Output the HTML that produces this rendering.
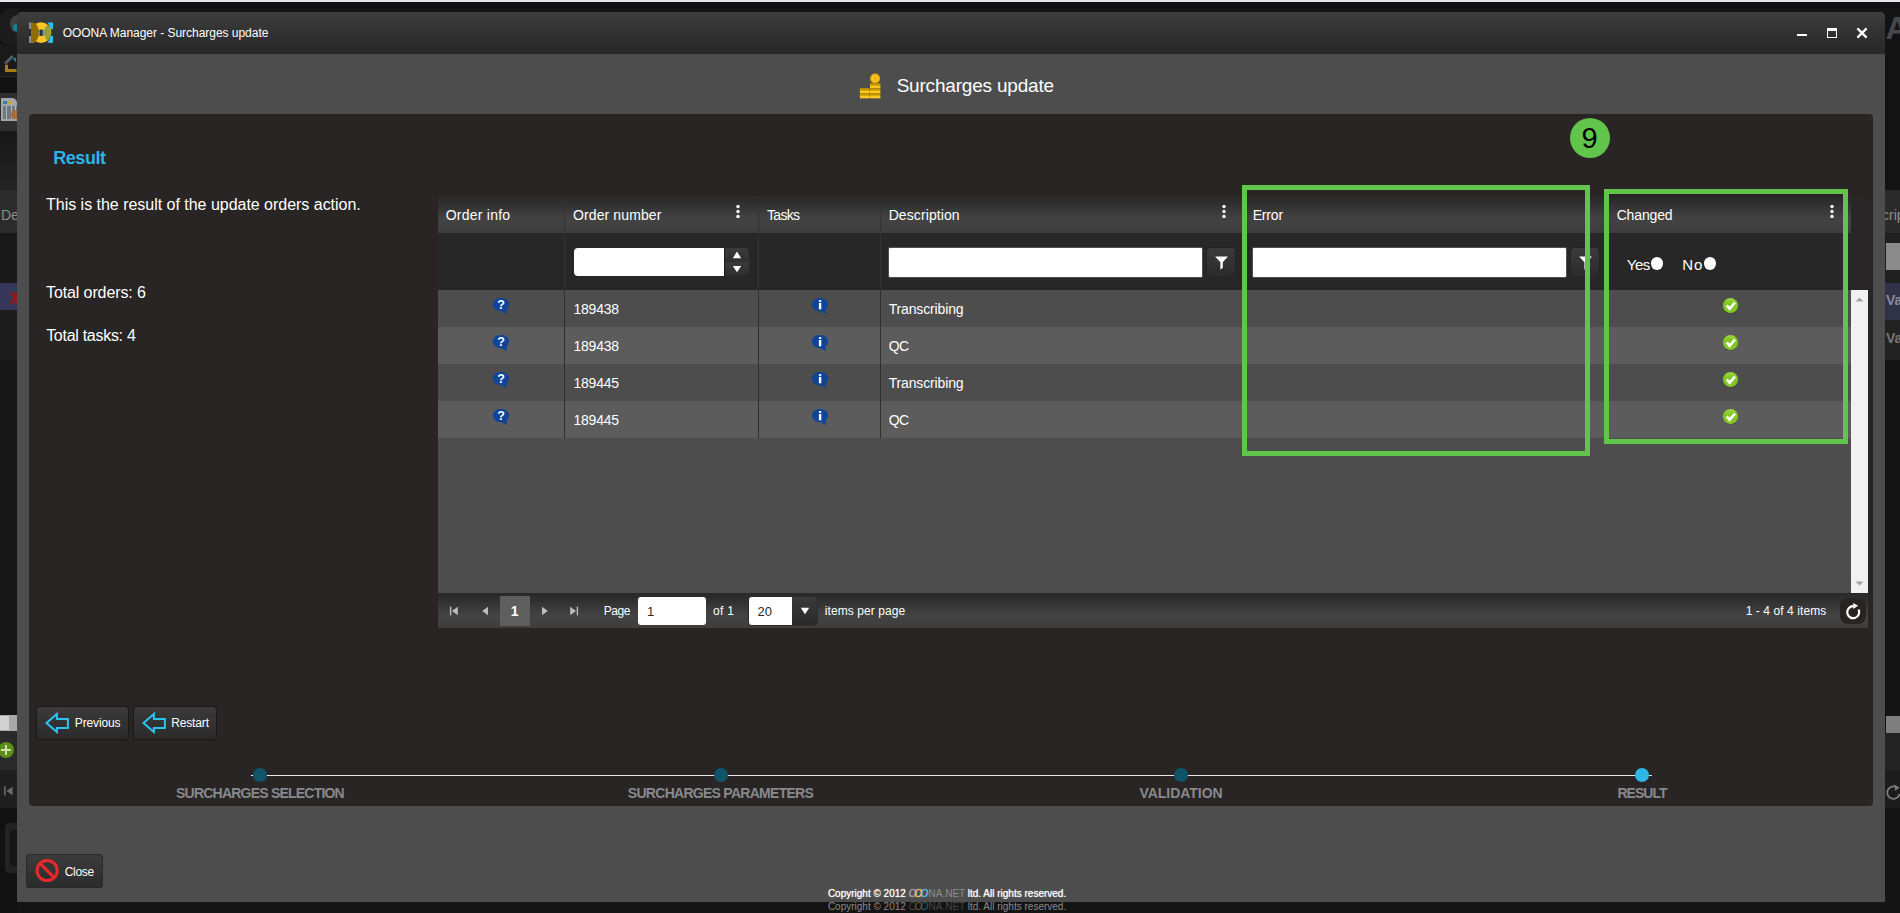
<!DOCTYPE html>
<html lang="en"><head><meta charset="utf-8"><title>OOONA Manager - Surcharges update</title>
<style>
html,body{margin:0;padding:0}
body{width:1900px;height:913px;overflow:hidden;position:relative;background:#161616;font-family:"Liberation Sans",sans-serif}
body>div,body>svg{position:absolute;display:block}
.t{white-space:pre}
</style></head><body>
<div style="left:0px;top:0px;width:1900px;height:2px;background:#e4e4ea"></div>
<div style="left:0px;top:2px;width:1900px;height:6px;background:#101010"></div>
<div style="left:0px;top:8px;width:1900px;height:905px;background:#141414"></div>
<div style="left:0px;top:9px;width:17px;height:36px;background:#1c1c1c;border-radius:10px 0 0 10px"></div>
<div style="left:10px;top:14.5px;width:14px;height:18.0px;background:#3d4144;border-radius:50%"></div>
<div style="left:13px;top:24px;width:7px;height:6.5px;background:#1b7f9c;border-radius:50%"></div>
<div style="left:0px;top:45px;width:17px;height:31px;background:#1a1a1a"></div>
<svg style="left:4px;top:54px" width="13" height="20" viewBox="0 0 13 20"><path d="M1 9.7L8.8 2.1" stroke="#585c60" stroke-width="2.8" fill="none"/><path d="M8.6 4.4L12 3.4V8.2Z" fill="#1e86a8"/><path d="M2.5 10.7V16.5H12.5" stroke="#a87e14" stroke-width="3" fill="none"/></svg>
<div style="left:0px;top:76px;width:17px;height:1px;background:#2a2a2a"></div>
<div style="left:0px;top:77px;width:17px;height:16px;background:#121212"></div>
<div style="left:0px;top:93px;width:17px;height:38px;background:#2f2f2f"></div>
<div style="left:1px;top:98px;width:16px;height:23px;background:#a4a7aa;border-radius:0 5px 0 0"></div>
<div style="left:3px;top:106px;width:14px;height:13px;background:repeating-linear-gradient(90deg,#6f7880 0 3px,#b5b8bb 3px 4.5px)"></div>
<div style="left:3px;top:101px;width:9px;height:3px;background:linear-gradient(90deg,#3d7fa8 0 4px,#c9a23a 4px)"></div>
<div style="left:11px;top:110px;width:6px;height:9px;background:#b5672a;border-radius:4px 0 0 4px;opacity:.85"></div>
<div style="left:0px;top:131px;width:17px;height:59px;background:linear-gradient(#181818,#232323)"></div>
<div style="left:0px;top:190px;width:17px;height:43px;background:#2c2c2c"></div>
<div class="t" style="left:1.00px;top:207.00px;font-size:14.0px;line-height:16px;color:#8d8d8d;">De</div>
<div style="left:0px;top:233px;width:17px;height:50px;background:#191919"></div>
<div style="left:0px;top:283px;width:17px;height:27px;background:#35375a"></div>
<svg style="left:9px;top:290px" width="8" height="16" viewBox="0 0 8 16"><path d="M2 2L10 14M10 2L2 14" stroke="#8e1b1b" stroke-width="3.4"/></svg>
<div style="left:0px;top:310px;width:17px;height:50px;background:#1c1c1c"></div>
<div style="left:0px;top:360px;width:17px;height:355px;background:#171717"></div>
<div style="left:0px;top:715px;width:17px;height:16px;background:#a8a8a8"></div>
<div style="left:0px;top:716px;width:9px;height:14px;background:#d3d3d3"></div>
<div style="left:0px;top:731px;width:17px;height:39px;background:#2a2a2a"></div>
<div style="left:-2px;top:742px;width:16px;height:16px;background:#5b8d1a;border-radius:50%"></div>
<div style="left:1px;top:749px;width:10px;height:2px;background:#cfe0a8"></div>
<div style="left:5px;top:745px;width:2px;height:10px;background:#cfe0a8"></div>
<div style="left:0px;top:770px;width:17px;height:38px;background:#1f1f1f"></div>
<svg style="left:4px;top:786px" width="9" height="10" viewBox="0 0 9 10"><path d="M0.8 0.5V9.5" stroke="#6e6e6e" stroke-width="1.5"/><path d="M8.5 0.8V9.2L2.5 5Z" fill="#6e6e6e"/></svg>
<div style="left:0px;top:808px;width:17px;height:105px;background:#121212"></div>
<div style="left:5px;top:823px;width:12px;height:50px;background:#232323;border-radius:4px 0 0 4px"></div>
<div style="left:10px;top:830px;width:7px;height:36px;background:#161616;border-radius:4px 0 0 4px"></div>
<div style="left:1885px;top:8px;width:15px;height:182px;background:#131313"></div>
<div class="t" style="left:1885.50px;top:10.00px;font-size:32.0px;line-height:36px;color:#46484c;font-weight:700;">A</div>
<div style="left:1885px;top:190px;width:15px;height:43px;background:#2b2b2b"></div>
<div class="t" style="left:1882.00px;top:207.00px;font-size:14.0px;line-height:16px;color:#8d8d8d;">crip</div>
<div style="left:1885px;top:233px;width:15px;height:50px;background:#202020"></div>
<div style="left:1886px;top:243px;width:14px;height:27px;background:#8a8a8a"></div>
<div style="left:1885px;top:283px;width:15px;height:37px;background:#30324a"></div>
<div class="t" style="left:1886.00px;top:292.00px;font-size:14.0px;line-height:16px;color:#8a8a9a;font-weight:700;">Va</div>
<div style="left:1885px;top:320px;width:15px;height:40px;background:#222"></div>
<div class="t" style="left:1886.00px;top:330.00px;font-size:14.0px;line-height:16px;color:#777;font-weight:700;">Va</div>
<div style="left:1886px;top:716px;width:14px;height:17px;background:#7e7e7e"></div>
<div style="left:1885px;top:733px;width:15px;height:37px;background:#232323"></div>
<div style="left:1885px;top:770px;width:15px;height:38px;background:#1c1c1c"></div>
<svg style="left:1886px;top:783px" width="14" height="18" viewBox="0 0 14 18"><path d="M11 4.5A6.2 6.2 0 1 0 13.5 11" fill="none" stroke="#7a7a7a" stroke-width="1.8"/><path d="M8 1.5L13.5 4.5L9.5 8Z" fill="#7a7a7a"/></svg>
<div style="left:17px;top:12.4px;width:1868px;height:889.6px;background:#4d4d4d;border-radius:5px 5px 0 0"></div>
<div style="left:17px;top:12.4px;width:1868px;height:41.6px;background:linear-gradient(#3e3e3e,#303030 55%,#282828);border-radius:5px 5px 0 0"></div>
<svg style="left:29px;top:22px" width="24" height="21" viewBox="0 0 24 21">
<path d="M0 0.5H2.4V7.2H0ZM0 13.8H2.4V17L5.8 21H0Z" fill="#8b8f94"/>
<rect x="0" y="7.2" width="2.4" height="6.6" fill="#1d2230"/>
<path d="M18.2 0.5H24V7.6L21.5 7C21 4.5 20 2.3 18.2 0.5ZM18.2 20.7H24V13.6L21.5 14.2C21 16.7 20 18.9 18.2 20.7Z" fill="#2cc3f0"/>
<circle cx="12" cy="10.6" r="10.3" fill="#fdc427"/>
<path d="M2 0.4L4.8 0.4C8 2 9.9 6 9.9 10.6C9.9 15.2 8 19.2 4.8 20.8L2 20.8Z" fill="#8f6b00"/>
<path d="M18.4 2.7C20.8 4.7 21.9 7.6 21.9 10.6C21.9 13.6 20.8 16.5 18.4 18.8C16 16.5 15 13.6 15 10.6C15 7.6 16 4.7 18.4 2.7Z" fill="#92a23a"/>
<circle cx="12.1" cy="10.8" r="3.2" fill="#2e3236"/>
<path d="M8.9 10.8a3.2 3.2 0 0 1 1.9-2.9v5.8a3.2 3.2 0 0 1-1.9-2.9z" fill="#8b8f94"/>
<path d="M15.3 10.8a3.2 3.2 0 0 0-1.7-2.8v5.6a3.2 3.2 0 0 0 1.7-2.8z" fill="#2cc3f0"/>
</svg>
<div class="t" style="left:62.65px;top:26.00px;font-size:12.0px;line-height:14px;color:#fff;letter-spacing:-0.033px;">OOONA Manager - Surcharges update</div>
<div style="left:1797px;top:34px;width:10px;height:2px;background:#fff"></div>
<div style="left:1827px;top:28px;width:10px;height:10px;border:1.4px solid #fff;border-top-width:3px;box-sizing:border-box"></div>
<svg style="left:1856px;top:27px" width="12" height="12" viewBox="0 0 12 12"><path d="M1.4 1.4L10.6 10.6M10.6 1.4L1.4 10.6" stroke="#fff" stroke-width="2.3"/></svg>
<svg style="left:859px;top:73px" width="22" height="26" viewBox="0 0 22 26">
<circle cx="16.1" cy="5.5" r="5.1" fill="#e3a808"/><circle cx="16.1" cy="5.5" r="3.5" fill="#fcc720"/><rect x="15.5" y="3.6" width="1.3" height="3.8" fill="#d79f06"/>
<rect x="11" y="10.1" width="10.3" height="15.1" fill="#c99808"/>
<rect x="0.9" y="15" width="9.7" height="10.2" fill="#c99808"/>
<path d="M11 13.9h10.3M11 19h10.3M11 24h10.3M0.9 19h9.7M0.9 24h9.7" stroke="#ffc926" stroke-width="2.4"/>
<path d="M11 10.6h10.3M11 15.4h10.3M11 20.5h10.3M0.9 15.5h9.7M0.9 20.5h9.7" stroke="#b08300" stroke-width="0.9"/>
</svg>
<div class="t" style="left:896.65px;top:75.00px;font-size:19.0px;line-height:21px;color:#fff;letter-spacing:-0.198px;">Surcharges update</div>
<div style="left:29px;top:114px;width:1844px;height:692px;background:#292524;border-radius:4px"></div>
<div class="t" style="left:53.25px;top:148.00px;font-size:18.0px;line-height:20px;color:#2cb4e4;font-weight:700;letter-spacing:-0.453px;">Result</div>
<div class="t" style="left:46.05px;top:196.00px;font-size:16.0px;line-height:17px;color:#fff;letter-spacing:-0.022px;">This is the result of the update orders action.</div>
<div class="t" style="left:46.05px;top:284.00px;font-size:16.0px;line-height:17px;color:#fff;letter-spacing:-0.113px;">Total orders: 6</div>
<div class="t" style="left:46.15px;top:327.00px;font-size:16.0px;line-height:17px;color:#fff;letter-spacing:-0.284px;">Total tasks: 4</div>
<div style="left:438px;top:196px;width:1430px;height:37px;background:linear-gradient(#292929 0%,#2f2f2f 20%,#3b3b3b 45%,#434343 62%,#3d3d3d 100%)"></div>
<div style="left:1851px;top:196px;width:17px;height:94px;background:#282626"></div>
<div style="left:438px;top:233px;width:1413px;height:57px;background:#272727"></div>
<div style="left:564px;top:196px;width:1px;height:94px;background:#333"></div>
<div style="left:758px;top:196px;width:1px;height:94px;background:#333"></div>
<div style="left:880px;top:196px;width:1px;height:94px;background:#333"></div>
<div style="left:1244px;top:196px;width:1px;height:94px;background:#333"></div>
<div style="left:1608px;top:196px;width:1px;height:94px;background:#333"></div>
<div class="t" style="left:445.65px;top:207.00px;font-size:14.0px;line-height:16px;color:#fff;letter-spacing:0.245px;">Order info</div>
<div class="t" style="left:572.95px;top:207.00px;font-size:14.0px;line-height:16px;color:#fff;letter-spacing:0.120px;">Order number</div>
<div class="t" style="left:767.05px;top:207.00px;font-size:14.0px;line-height:16px;color:#fff;letter-spacing:-0.679px;">Tasks</div>
<div class="t" style="left:888.65px;top:207.00px;font-size:14.0px;line-height:16px;color:#fff;letter-spacing:0.097px;">Description</div>
<div class="t" style="left:1252.65px;top:207.00px;font-size:14.0px;line-height:16px;color:#fff;letter-spacing:-0.145px;">Error</div>
<div class="t" style="left:1616.65px;top:207.00px;font-size:14.0px;line-height:16px;color:#fff;letter-spacing:-0.147px;">Changed</div>
<svg style="left:736.4px;top:205px" width="4" height="13" viewBox="0 0 4 13"><circle cx="2" cy="1.6" r="1.7" fill="#fff"/><circle cx="2" cy="6.5" r="1.7" fill="#fff"/><circle cx="2" cy="11.5" r="1.7" fill="#fff"/></svg>
<svg style="left:1222.4px;top:205px" width="4" height="13" viewBox="0 0 4 13"><circle cx="2" cy="1.6" r="1.7" fill="#fff"/><circle cx="2" cy="6.5" r="1.7" fill="#fff"/><circle cx="2" cy="11.5" r="1.7" fill="#fff"/></svg>
<svg style="left:1829.5px;top:205px" width="4" height="13" viewBox="0 0 4 13"><circle cx="2" cy="1.6" r="1.7" fill="#fff"/><circle cx="2" cy="6.5" r="1.7" fill="#fff"/><circle cx="2" cy="11.5" r="1.7" fill="#fff"/></svg>
<div style="left:574px;top:248px;width:175.29999999999995px;height:28.19999999999999px;background:#1c1c1c;border-radius:4px"></div>
<div style="left:725px;top:248px;width:24.299999999999955px;height:13.5px;background:linear-gradient(#3b3b3b,#2f2f2f);border-radius:0 4px 0 0"></div>
<div style="left:725px;top:262.3px;width:24.299999999999955px;height:13.899999999999977px;background:linear-gradient(#3b3b3b,#2d2d2d);border-radius:0 0 4px 0"></div>
<div style="left:574px;top:248px;width:150.10000000000002px;height:28.19999999999999px;background:#fff;border-radius:4px 0 0 4px"></div>
<svg style="left:732px;top:251px" width="10" height="22" viewBox="0 0 10 22"><path d="M5 0.6L9.2 7.2H0.8Z M5 21.2L9.2 14.9H0.8Z" fill="#fff"/></svg>
<div style="left:889px;top:247.5px;width:312.5999999999999px;height:29.19999999999999px;background:#fff;border-radius:1px;box-shadow:0 0 0 1px rgba(160,160,160,.35)"></div>
<div style="left:1207px;top:248px;width:28px;height:28.5px;background:linear-gradient(#3b3b3b,#2a2a2a);border-radius:4px;box-shadow:0 0 0 1px #242424"></div><svg style="left:1214.5px;top:255.5px" width="13" height="14" viewBox="0 0 13 14"><path d="M0.1 0.4H12.9L7.8 6.2V11.8L5.4 13.8V6.2Z" fill="#fff"/></svg>
<div style="left:1253px;top:247.5px;width:312.70000000000005px;height:29.19999999999999px;background:#fff;border-radius:1px;box-shadow:0 0 0 1px rgba(160,160,160,.35)"></div>
<div style="left:1571px;top:248px;width:28px;height:28.5px;background:linear-gradient(#3b3b3b,#2a2a2a);border-radius:4px;box-shadow:0 0 0 1px #242424"></div><svg style="left:1578.5px;top:255.5px" width="13" height="14" viewBox="0 0 13 14"><path d="M0.1 0.4H12.9L7.8 6.2V11.8L5.4 13.8V6.2Z" fill="#fff"/></svg>
<div class="t" style="left:1626.75px;top:256.00px;font-size:15.0px;line-height:17px;color:#fff;letter-spacing:-0.461px;">Yes</div>
<div style="left:1650.7px;top:257px;width:12.200000000000045px;height:12.600000000000023px;background:#fff;border-radius:50%"></div>
<div class="t" style="left:1682.25px;top:256.00px;font-size:15.0px;line-height:17px;color:#fff;letter-spacing:0.906px;">No</div>
<div style="left:1703.5px;top:257px;width:12.299999999999955px;height:12.600000000000023px;background:#fff;border-radius:50%"></div>
<div style="left:438px;top:290px;width:1413px;height:303px;background:#4d4d4d"></div>
<svg style="left:492px;top:297.9px" width="18" height="18" viewBox="0 0 18 18"><path d="M8.6 12.4L14.9 16.3L14.3 10.2Z" fill="#0e4499"/><ellipse cx="9" cy="6.5" rx="8.1" ry="6.7" fill="#0e4499"/><text x="9.1" y="11.2" font-family="Liberation Sans,sans-serif" font-weight="700" font-size="12.5" fill="#fff" text-anchor="middle">?</text></svg>
<div class="t" style="left:573.55px;top:301.00px;font-size:14.0px;line-height:16px;color:#fff;letter-spacing:-0.253px;">189438</div>
<svg style="left:811px;top:297.9px" width="18" height="18" viewBox="0 0 18 18"><path d="M8.6 12.4L14.9 16.3L14.3 10.2Z" fill="#0e4499"/><ellipse cx="9" cy="6.5" rx="8.1" ry="6.7" fill="#0e4499"/><rect x="7.9" y="2" width="2.4" height="2.1" fill="#e4e9f3"/><rect x="7.9" y="5" width="2.4" height="6.3" fill="#fff"/></svg>
<div class="t" style="left:888.65px;top:301.00px;font-size:14.0px;line-height:16px;color:#fff;letter-spacing:-0.143px;">Transcribing</div>
<svg style="left:1722px;top:297px" width="17" height="17" viewBox="0 0 17 17"><defs><linearGradient id="gr0" x1="0" y1="0" x2="0" y2="1"><stop offset="0" stop-color="#9fd845"/><stop offset=".45" stop-color="#7cc41a"/><stop offset="1" stop-color="#86cb26"/></linearGradient></defs><ellipse cx="8.5" cy="15" rx="5" ry="1.2" fill="#2c2c33" opacity=".6"/><circle cx="8.5" cy="8.5" r="7.6" fill="url(#gr0)"/><path d="M4.6 8.3L7.6 11.7L13 5.6" fill="none" stroke="#fff" stroke-width="2.7"/></svg>
<div style="left:438px;top:327px;width:1413px;height:37px;background:#5c5c5c"></div>
<svg style="left:492px;top:334.9px" width="18" height="18" viewBox="0 0 18 18"><path d="M8.6 12.4L14.9 16.3L14.3 10.2Z" fill="#0e4499"/><ellipse cx="9" cy="6.5" rx="8.1" ry="6.7" fill="#0e4499"/><text x="9.1" y="11.2" font-family="Liberation Sans,sans-serif" font-weight="700" font-size="12.5" fill="#fff" text-anchor="middle">?</text></svg>
<div class="t" style="left:573.55px;top:338.00px;font-size:14.0px;line-height:16px;color:#fff;letter-spacing:-0.253px;">189438</div>
<svg style="left:811px;top:334.9px" width="18" height="18" viewBox="0 0 18 18"><path d="M8.6 12.4L14.9 16.3L14.3 10.2Z" fill="#0e4499"/><ellipse cx="9" cy="6.5" rx="8.1" ry="6.7" fill="#0e4499"/><rect x="7.9" y="2" width="2.4" height="2.1" fill="#e4e9f3"/><rect x="7.9" y="5" width="2.4" height="6.3" fill="#fff"/></svg>
<div class="t" style="left:888.65px;top:338.00px;font-size:14.0px;line-height:16px;color:#fff;letter-spacing:-0.450px;">QC</div>
<svg style="left:1722px;top:334px" width="17" height="17" viewBox="0 0 17 17"><defs><linearGradient id="gr1" x1="0" y1="0" x2="0" y2="1"><stop offset="0" stop-color="#9fd845"/><stop offset=".45" stop-color="#7cc41a"/><stop offset="1" stop-color="#86cb26"/></linearGradient></defs><ellipse cx="8.5" cy="15" rx="5" ry="1.2" fill="#2c2c33" opacity=".6"/><circle cx="8.5" cy="8.5" r="7.6" fill="url(#gr1)"/><path d="M4.6 8.3L7.6 11.7L13 5.6" fill="none" stroke="#fff" stroke-width="2.7"/></svg>
<svg style="left:492px;top:371.9px" width="18" height="18" viewBox="0 0 18 18"><path d="M8.6 12.4L14.9 16.3L14.3 10.2Z" fill="#0e4499"/><ellipse cx="9" cy="6.5" rx="8.1" ry="6.7" fill="#0e4499"/><text x="9.1" y="11.2" font-family="Liberation Sans,sans-serif" font-weight="700" font-size="12.5" fill="#fff" text-anchor="middle">?</text></svg>
<div class="t" style="left:573.55px;top:375.00px;font-size:14.0px;line-height:16px;color:#fff;letter-spacing:-0.253px;">189445</div>
<svg style="left:811px;top:371.9px" width="18" height="18" viewBox="0 0 18 18"><path d="M8.6 12.4L14.9 16.3L14.3 10.2Z" fill="#0e4499"/><ellipse cx="9" cy="6.5" rx="8.1" ry="6.7" fill="#0e4499"/><rect x="7.9" y="2" width="2.4" height="2.1" fill="#e4e9f3"/><rect x="7.9" y="5" width="2.4" height="6.3" fill="#fff"/></svg>
<div class="t" style="left:888.65px;top:375.00px;font-size:14.0px;line-height:16px;color:#fff;letter-spacing:-0.143px;">Transcribing</div>
<svg style="left:1722px;top:371px" width="17" height="17" viewBox="0 0 17 17"><defs><linearGradient id="gr2" x1="0" y1="0" x2="0" y2="1"><stop offset="0" stop-color="#9fd845"/><stop offset=".45" stop-color="#7cc41a"/><stop offset="1" stop-color="#86cb26"/></linearGradient></defs><ellipse cx="8.5" cy="15" rx="5" ry="1.2" fill="#2c2c33" opacity=".6"/><circle cx="8.5" cy="8.5" r="7.6" fill="url(#gr2)"/><path d="M4.6 8.3L7.6 11.7L13 5.6" fill="none" stroke="#fff" stroke-width="2.7"/></svg>
<div style="left:438px;top:401px;width:1413px;height:37px;background:#5c5c5c"></div>
<svg style="left:492px;top:408.9px" width="18" height="18" viewBox="0 0 18 18"><path d="M8.6 12.4L14.9 16.3L14.3 10.2Z" fill="#0e4499"/><ellipse cx="9" cy="6.5" rx="8.1" ry="6.7" fill="#0e4499"/><text x="9.1" y="11.2" font-family="Liberation Sans,sans-serif" font-weight="700" font-size="12.5" fill="#fff" text-anchor="middle">?</text></svg>
<div class="t" style="left:573.55px;top:412.00px;font-size:14.0px;line-height:16px;color:#fff;letter-spacing:-0.253px;">189445</div>
<svg style="left:811px;top:408.9px" width="18" height="18" viewBox="0 0 18 18"><path d="M8.6 12.4L14.9 16.3L14.3 10.2Z" fill="#0e4499"/><ellipse cx="9" cy="6.5" rx="8.1" ry="6.7" fill="#0e4499"/><rect x="7.9" y="2" width="2.4" height="2.1" fill="#e4e9f3"/><rect x="7.9" y="5" width="2.4" height="6.3" fill="#fff"/></svg>
<div class="t" style="left:888.65px;top:412.00px;font-size:14.0px;line-height:16px;color:#fff;letter-spacing:-0.450px;">QC</div>
<svg style="left:1722px;top:408px" width="17" height="17" viewBox="0 0 17 17"><defs><linearGradient id="gr3" x1="0" y1="0" x2="0" y2="1"><stop offset="0" stop-color="#9fd845"/><stop offset=".45" stop-color="#7cc41a"/><stop offset="1" stop-color="#86cb26"/></linearGradient></defs><ellipse cx="8.5" cy="15" rx="5" ry="1.2" fill="#2c2c33" opacity=".6"/><circle cx="8.5" cy="8.5" r="7.6" fill="url(#gr3)"/><path d="M4.6 8.3L7.6 11.7L13 5.6" fill="none" stroke="#fff" stroke-width="2.7"/></svg>
<div style="left:564px;top:290px;width:1px;height:148px;background:#2e2e2e"></div>
<div style="left:758px;top:290px;width:1px;height:148px;background:#2e2e2e"></div>
<div style="left:880px;top:290px;width:1px;height:148px;background:#2e2e2e"></div>
<div style="left:1851px;top:290px;width:17px;height:303px;background:#f1f1f1"></div>
<svg style="left:1855px;top:297px" width="9" height="5" viewBox="0 0 9 5"><path d="M0.5 4.5L4.5 0.5L8.5 4.5Z" fill="#a3a3a3"/></svg>
<svg style="left:1855px;top:581px" width="9" height="5" viewBox="0 0 9 5"><path d="M0.5 0.5L4.5 4.5L8.5 0.5Z" fill="#a3a3a3"/></svg>
<div style="left:438px;top:593px;width:1430px;height:35px;background:linear-gradient(#292929 0%,#2f2f2f 20%,#3b3b3b 45%,#434343 65%,#3e3e3e 100%)"></div>
<svg style="left:449px;top:606px" width="10" height="10" viewBox="0 0 10 10"><path d="M1.6 0.7V9.3" stroke="#bdbdbd" stroke-width="1.4"/><path d="M8.8 0.8V9.2L3 5Z" fill="#bdbdbd"/></svg>
<svg style="left:480px;top:606px" width="10" height="10" viewBox="0 0 10 10"><path d="M8 0.8V9.2L2.2 5Z" fill="#bdbdbd"/></svg>
<div style="left:500px;top:596px;width:30px;height:30px;background:#5e5e5e"></div>
<div class="t" style="left:510.70px;top:603.00px;font-size:14.0px;line-height:16px;color:#fff;font-weight:700;">1</div>
<svg style="left:540px;top:606px" width="10" height="10" viewBox="0 0 10 10"><path d="M2 0.8V9.2L7.8 5Z" fill="#bdbdbd"/></svg>
<svg style="left:569px;top:606px" width="10" height="10" viewBox="0 0 10 10"><path d="M8.4 0.7V9.3" stroke="#bdbdbd" stroke-width="1.4"/><path d="M1.2 0.8V9.2L7 5Z" fill="#bdbdbd"/></svg>
<div class="t" style="left:603.65px;top:604.00px;font-size:12.0px;line-height:14px;color:#fff;letter-spacing:-0.383px;">Page</div>
<div style="left:638px;top:597px;width:68.29999999999995px;height:28px;background:#fff;border-radius:3px"></div>
<div class="t" style="left:647.00px;top:604.00px;font-size:13.0px;line-height:15px;color:#2b2b2b;">1</div>
<div class="t" style="left:713.05px;top:604.00px;font-size:12.0px;line-height:14px;color:#fff;letter-spacing:0.321px;">of 1</div>
<div style="left:749px;top:597px;width:68.39999999999998px;height:28px;background:linear-gradient(#3a3a3a,#2a2a2a);border-radius:4px;box-shadow:0 0 0 1px #2c2c2c"></div>
<div style="left:749px;top:597px;width:42.799999999999955px;height:28px;background:#fff;border-radius:3px 0 0 3px"></div>
<div class="t" style="left:757.50px;top:604.00px;font-size:13.0px;line-height:15px;color:#2b2b2b;">20</div>
<svg style="left:800px;top:607px" width="10" height="8" viewBox="0 0 10 8"><path d="M0.8 0.8H9.2L5 7.2Z" fill="#fff"/></svg>
<div class="t" style="left:824.85px;top:604.00px;font-size:12.0px;line-height:14px;color:#fff;letter-spacing:0.079px;">items per page</div>
<div class="t" style="left:1745.65px;top:604.00px;font-size:12.0px;line-height:14px;color:#fff;letter-spacing:0.083px;">1 - 4 of 4 items</div>
<div style="left:1840px;top:598.3px;width:26px;height:25.700000000000045px;background:#282424;border-radius:8px"></div>
<svg style="left:1845px;top:602px" width="17" height="18" viewBox="0 0 17 18"><path d="M8.4 4.2A6 6 0 1 0 13.6 7.6" fill="none" stroke="#fff" stroke-width="2.2"/><path d="M8.2 0.9L13.1 3.7L8.2 7Z" fill="#fff"/></svg>
<div style="left:36.7px;top:707px;width:91.3px;height:32.39999999999998px;background:linear-gradient(#3a3a3a,#2b2b2b);border-radius:3.5px;box-shadow:0 0 1px 0.5px rgba(20,18,17,.6)"></div>
<svg style="left:43.9px;top:711px" width="26" height="24" viewBox="0 0 26 24"><path d="M2.5 12L12.9 2.9V7.9H23.9V16.9H12.9V21.1Z" fill="none" stroke="#29c4f2" stroke-width="2" stroke-linejoin="miter"/></svg>
<div class="t" style="left:74.85px;top:716.00px;font-size:12.0px;line-height:14px;color:#fff;letter-spacing:-0.148px;">Previous</div>
<div style="left:133.7px;top:707px;width:82.5px;height:32.39999999999998px;background:linear-gradient(#3a3a3a,#2b2b2b);border-radius:3.5px;box-shadow:0 0 1px 0.5px rgba(20,18,17,.6)"></div>
<svg style="left:140.9px;top:711px" width="26" height="24" viewBox="0 0 26 24"><path d="M2.5 12L12.9 2.9V7.9H23.9V16.9H12.9V21.1Z" fill="none" stroke="#29c4f2" stroke-width="2" stroke-linejoin="miter"/></svg>
<div class="t" style="left:171.15px;top:716.00px;font-size:12.0px;line-height:14px;color:#fff;letter-spacing:-0.141px;">Restart</div>
<div style="left:26.2px;top:854.2px;width:76.7px;height:33.5px;background:linear-gradient(#3c3c3c,#2b2b2b);border-radius:4px;box-shadow:inset 0 0 0 1px #2a2a2a"></div>
<svg style="left:35px;top:858px" width="25" height="25" viewBox="0 0 25 25"><circle cx="12.1" cy="12.5" r="10.1" fill="none" stroke="#e8282c" stroke-width="3"/><path d="M5 5.4L19.2 19.6" stroke="#e8282c" stroke-width="3"/></svg>
<div class="t" style="left:64.65px;top:865.00px;font-size:12.0px;line-height:14px;color:#fff;letter-spacing:-0.258px;">Close</div>
<div style="left:251px;top:774.7px;width:1401px;height:1.5px;background:#e8e8e8"></div>
<div style="left:253px;top:768px;width:14px;height:14px;background:#0f5468;border-radius:50%"></div>
<div class="t" style="left:176.05px;top:785.00px;font-size:14.0px;line-height:16px;color:#88898d;font-weight:700;letter-spacing:-0.784px;">SURCHARGES SELECTION</div>
<div style="left:713.5px;top:768px;width:14.0px;height:14px;background:#0f5468;border-radius:50%"></div>
<div class="t" style="left:627.85px;top:785.00px;font-size:14.0px;line-height:16px;color:#88898d;font-weight:700;letter-spacing:-0.721px;">SURCHARGES PARAMETERS</div>
<div style="left:1174px;top:768px;width:14px;height:14px;background:#0f5468;border-radius:50%"></div>
<div class="t" style="left:1139.40px;top:785.00px;font-size:14.0px;line-height:16px;color:#88898d;font-weight:700;letter-spacing:-0.028px;">VALIDATION</div>
<div style="left:1635px;top:768px;width:14px;height:14px;background:#2cb7e8;border-radius:50%"></div>
<div class="t" style="left:1617.45px;top:785.00px;font-size:14.0px;line-height:16px;color:#88898d;font-weight:700;letter-spacing:-0.978px;">RESULT</div>
<div class="t" style="left:827.90px;top:888.00px;font-size:10.0px;line-height:11px;color:#fff;text-shadow:0 0 1px rgba(255,255,255,.85);">Copyright © 2012 <span style="font-style:italic;color:#8e8e8e;letter-spacing:-1.9px">O</span><span style="font-style:italic;color:#f5b81f;letter-spacing:-1.9px">O</span><span style="font-style:italic;color:#2cb7e8;letter-spacing:0.3px">O</span><span style="color:#8e8e8e;text-shadow:none">NA.NET</span> ltd. All rights reserved.</div>
<div class="t" style="left:827.90px;top:901.00px;font-size:10.0px;line-height:11px;color:#8b8b8b;">Copyright © 2012 <span style="font-style:italic;color:#454545;letter-spacing:-1.9px">O</span><span style="font-style:italic;color:#6f5a22;letter-spacing:-1.9px">O</span><span style="font-style:italic;color:#2a6478;letter-spacing:0.3px">O</span><span style="color:#454545;text-shadow:none">NA.NET</span> ltd. All rights reserved.</div>
<div style="left:1242px;top:185px;width:348px;height:271px;border:5px solid #62c54b;box-sizing:border-box"></div>
<div style="left:1604px;top:189px;width:244px;height:255px;border:5px solid #62c54b;box-sizing:border-box"></div>
<div style="left:1570px;top:118px;width:40px;height:40px;background:#62c54b;border-radius:50%"></div>
<div class="t" style="left:1581.53px;top:122.00px;font-size:29.0px;line-height:32px;color:#000;">9</div>
</body></html>
